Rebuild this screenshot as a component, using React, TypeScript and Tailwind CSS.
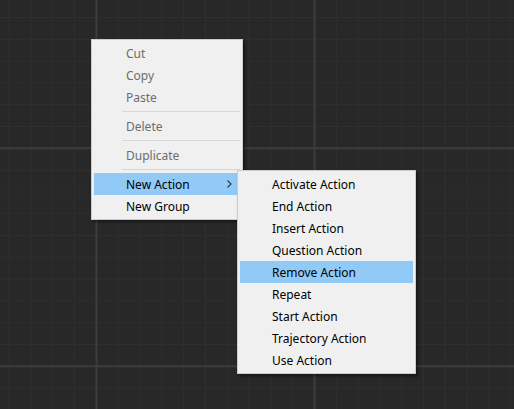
import React from "react"

const font = { fontFamily: '"Noto Sans", "Open Sans", sans-serif' }

type Item = { label: string; disabled?: boolean; active?: boolean; submenu?: boolean } | "sep"

const mainItems: Item[] = [
  { label: "Cut", disabled: true },
  { label: "Copy", disabled: true },
  { label: "Paste", disabled: true },
  "sep",
  { label: "Delete", disabled: true },
  "sep",
  { label: "Duplicate", disabled: true },
  "sep",
  { label: "New Action", active: true, submenu: true },
  { label: "New Group" },
]

const subItems: Item[] = [
  { label: "Activate Action" },
  { label: "End Action" },
  { label: "Insert Action" },
  { label: "Question Action" },
  { label: "Remove Action", active: true },
  { label: "Repeat" },
  { label: "Start Action" },
  { label: "Trajectory Action" },
  { label: "Use Action" },
]

function Grid() {
  const step = 21.8
  const xs = Array.from({ length: 24 }, (_, i) => ({ v: 9.3 + i * step, major: i % 10 === 4 }))
  const ys = Array.from({ length: 19 }, (_, i) => ({ v: 17.5 + i * step, major: i % 10 === 6 }))
  return (
    <svg className="absolute inset-0" width={514} height={409}>
      <rect width={514} height={409} fill="#282828" />
      {xs.filter((l) => !l.major).map((l, i) => (
        <line key={"x" + i} x1={l.v} x2={l.v} y1={0} y2={409} stroke="#2f2f2f" strokeWidth={1} />
      ))}
      {ys.filter((l) => !l.major).map((l, i) => (
        <line key={"y" + i} y1={l.v} y2={l.v} x1={0} x2={514} stroke="#2f2f2f" strokeWidth={1} />
      ))}
      {xs.filter((l) => l.major).map((l, i) => (
        <line key={"X" + i} x1={l.v} x2={l.v} y1={0} y2={409} stroke="#3c3c3c" strokeWidth={2} />
      ))}
      {ys.filter((l) => l.major).map((l, i) => (
        <line key={"Y" + i} y1={l.v} y2={l.v} x1={0} x2={514} stroke="#3c3c3c" strokeWidth={2} />
      ))}
    </svg>
  )
}

function Menu({ items, className }: { items: Item[]; className: string }) {
  return (
    <div
      className={`absolute flex flex-col bg-[#f0f0f0] border border-[#cccccc] p-[2px] shadow-[2px_2px_3px_rgba(0,0,0,0.45)] ${className}`}
      style={font}
    >
      {items.map((it, i) =>
        it === "sep" ? (
          <div key={i} className="h-[7px] flex items-center pl-[28px]">
            <div className="h-px w-full bg-[#d7d7d7]" />
          </div>
        ) : (
          <div
            key={i}
            className={`h-[22px] flex items-center pl-[32px] pr-[8px] pt-px text-[12px] ${
              it.active ? "bg-[#91c9f7]" : ""
            } ${it.disabled ? "text-[#6d6d6d]" : "text-black"}`}
          >
            <span className="flex-1">{it.label}</span>
            {it.submenu && (
              <svg width="5" height="8" viewBox="0 0 5 8" className="-mt-px">
                <polyline points="0.5,0.5 4,4 0.5,7.5" fill="none" stroke="#333" strokeWidth="1.1" />
              </svg>
            )}
          </div>
        )
      )}
    </div>
  )
}

export default function App() {
  return (
    <div className="relative w-[514px] h-[409px] overflow-hidden bg-[#282828]">
      <Grid />
      <Menu items={mainItems} className="left-[91px] top-[39px] w-[152px]" />
      <Menu items={subItems} className="left-[237px] top-[170px] w-[179px]" />
    </div>
  )
}
